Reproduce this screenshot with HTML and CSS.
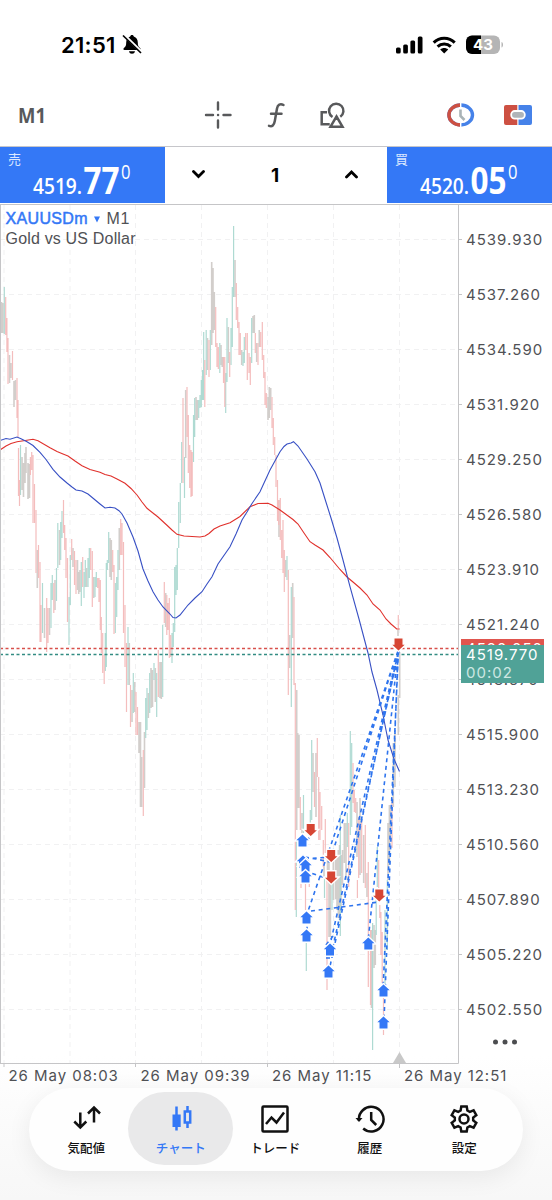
FILE: index.html
```html
<!DOCTYPE html>
<html lang="ja">
<head>
<meta charset="utf-8">
<title>XAUUSDm M1</title>
<link rel="stylesheet" href="styles.css">
</head>
<body>
<div class="screen">
  <header class="status">
    <div class="status-left">
      <span class="clock">21:51</span>
      <svg class="bell" width="20" height="21" viewBox="0 0 20 21"><path d="M10 1c-1 0-1.700.7-1.800 1.500C5.500 3.500 4.200 5.700 4.200 8.500c0 3-.6 4.200-2.300 5.500-.9.800-.6 2 .5 2h15.200c1.100 0 1.400-1.200.5-2-1.700-1.300-2.300-2.500-2.300-5.500 0-2.800-1.300-5-4-6C11.700 1.700 11 1 10 1zM7 17.200h6c-.2 1.700-1.500 2.500-3 2.500s-2.800-.8-3-2.500z"/><path d="M2 1l18 17.500" stroke="#fff" stroke-width="3"/><path d="M1 1.500l18 17.500" stroke="#000" stroke-width="1.700"/></svg>
    </div>
    <svg class="status-right" width="110" height="22" viewBox="0 0 110 22">
      <rect x="1" y="13.500" width="4.700" height="6" rx="1.500"/><rect x="8.200" y="10.500" width="4.700" height="9" rx="1.500"/><rect x="15.400" y="6.500" width="4.700" height="13" rx="1.500"/><rect x="22.800" y="2.500" width="4.700" height="17" rx="1.500"/>
      <g fill="none" stroke="#000" stroke-width="3"><path d="M38.700 8.600c5.800-5.800 15.200-5.800 21 0"/><path d="M42.600 12.700c3.700-3.600 9.500-3.600 13.200 0"/></g><path d="M45.200 15.600c2.300-2 5.700-2 8 0l-4 4z"/>
      <rect x="71" y="1.500" width="34" height="18.500" rx="6" fill="#b5b5b5"/><path d="M86 1.500v18.500h-9a6 6 0 0 1-6-6v-6.500a6 6 0 0 1 6-6z"/><path d="M106.500 8c2 .5 2 5 0 5.500z" fill="#b5b5b5"/>
      <text class="battery" x="88" y="16.300">43</text>
    </svg>
  </header>
  <nav class="toolbar">
    <svg class="period" width="185" height="30"><text x="0" y="23" textLength="28" lengthAdjust="spacingAndGlyphs">M1</text></svg>
    <svg class="tools" width="146" height="32" viewBox="0 0 146 32">
      <g fill="none" stroke="#58595b" stroke-width="2.400" stroke-linecap="round"><path d="M15 3.500v7M15 21.500v7M3 16h7M20.500 16h7"/><path d="M15 16h.1"/></g>
      <g fill="none" stroke="#58595b" stroke-width="2.500" stroke-linecap="round"><path d="M80.500 6c-3.200-1.700-5.800-.3-6.500 3.500l-2.200 12.500c-.8 4.500-2.600 6-5.800 4.800M68 14.800h10.500"/></g>
      <g fill="none" stroke="#58595b" stroke-width="2.500"><path d="M129.500 18a7.200 7.200 0 1 1 7.800-.2M124 13.300h-5.300v12h8M133.500 17.500l6 10.200h-12z"/></g>
    </svg>
    <svg class="modes" width="86" height="24" viewBox="0 0 86 24">
      <ellipse cx="14.700" cy="12" rx="11.800" ry="10" fill="none" stroke="#4682e9" stroke-width="3.400"/><path d="M14.700 2C8 2 2.900 6.500 2.900 12s5.100 10 11.800 10" fill="none" stroke="#cd5042" stroke-width="3.400"/><path d="M14.700 0v5M14.700 19v5" stroke="#fff" stroke-width="1.400"/><path d="M14.500 6.500v6.500l4 4" fill="none" stroke="#a9b3b7" stroke-width="2.600"/>
      <path d="M60 2h11.300v20H60a2 2 0 0 1-2-2V4a2 2 0 0 1 2-2z" fill="#cd5042"/><path d="M72.500 2H84a2 2 0 0 1 2 2v16a2 2 0 0 1-2 2H72.500z" fill="#4682e9"/><rect x="65.200" y="8" width="13.600" height="7.600" rx="3.500" fill="#afb4b8" stroke="#fff" stroke-width="1.800"/>
    </svg>
  </nav>
  <section class="trade">
    <div class="quote"><span class="side">売</span>
      <svg class="price" width="165" height="56"><text x="33" y="47" font-size="22" textLength="49" lengthAdjust="spacingAndGlyphs">4519.</text><text class="big" x="83.500" y="47" font-size="38" textLength="36" lengthAdjust="spacingAndGlyphs">77</text><text class="sup" x="121" y="32" font-size="19.500" textLength="9.500" lengthAdjust="spacingAndGlyphs">0</text></svg></div>
    <div class="volume">
      <svg width="13" height="9" viewBox="0 0 13 9"><path d="M1.500 1.500l5 5 5-5"/></svg>
      <span>1</span>
      <svg width="13" height="9" viewBox="0 0 13 9"><path d="M1.500 7l5-5 5 5"/></svg>
    </div>
    <div class="quote"><span class="side">買</span>
      <svg class="price" width="165" height="56"><text x="33" y="47" font-size="22" textLength="49" lengthAdjust="spacingAndGlyphs">4520.</text><text class="big" x="83.500" y="47" font-size="38" textLength="36" lengthAdjust="spacingAndGlyphs">05</text><text class="sup" x="121" y="32" font-size="19.500" textLength="9.500" lengthAdjust="spacingAndGlyphs">0</text></svg></div>
  </section>
  <svg class="chart" width="552" height="884" viewBox="0 204 552 884">
    <defs>
      <path id="up" d="M0-7.500L8 0H4.700V6.200H-4.700V0H-8Z" fill="#3478f6" stroke="#fff" stroke-width="1.400"/>
      <path id="down" d="M0 7.500L8 0H4.700V-6.200H-4.700V0H-8Z" fill="#d64533" stroke="#fff" stroke-width="1.400"/>
    </defs>
    <path class="grid" d="M4 205V1063M70 205V1063M135.500 205V1063M201.500 205V1063M267.500 205V1063M333.500 205V1063M399.500 205V1063"/>
    <path class="grid" d="M0 239.500H458M0 294.500H458M0 349.500H458M0 404.500H458M0 459.500H458M0 514.500H458M0 569.500H458M0 624.500H458M0 679.500H458M0 734.500H458M0 789.500H458M0 844.500H458M0 899.500H458M0 954.500H458M0 1009.500H458"/>
    <path class="mix" d="M1.500 302V333M3 303V333M9.500 355V383M11 363V378M14 381V407M15.500 380V400M22 457V490M23.500 463V497M25 453V483M26 447V473M28 463V499M29.500 464V498M37.300 550V588M44.500 608V638M49.500 608V635M55 580V610M59.500 530V565M73 548V567M77.500 560V590M78.700 572V594M80 570V592M86.700 568V587M93.700 577V598M110 538V577M111.300 540V580M119.300 528V570M129.300 643V685M132 690V722M134.700 682V712M139 722V753M140.500 722V807M141.700 757V807M144.500 732V788M148.300 693V718M151 668V708M152.500 670V707M155.300 668V702M160 662V698M161.300 662V699M165.700 593V627M185.700 390V458M196 397V420M197.300 400V420M207.500 338V370M211.700 262V345M213 268V333M214.300 292V330M221 345V365M222.200 357V367M228.300 327V363M235 260V297M241.700 350V365M253 316V333M254.300 315V333M256.700 343V362M259.300 330V347M268 397V420M269.300 387V418M270.700 388V410M279 500V537M285.700 560V577M289.700 635V668M292.700 583V638M297.700 733V808M299 735V808M302 813V833M313 753V792M316 753V817M327.500 853V880M329 853V937M330.400 870V937M333.300 855V900M335.500 860V899M337 855V910M338.300 850V918M339.600 845V920M341 855V910M342.500 850V885M344.300 823V863M346 823V880M357 802V857M360 798V875M363.700 835V883M367 873V897M374 925V968M375.300 930V965M388 823V880M389.400 805V865M390.500 805V840M393.300 743V807M395 733V787M398.300 695V735M399.700 652V698M398 630V636M296.700 690V830M324 865V877M371.500 930V1008"/>
    <path class="bull" d="M4.300 287V334M20.500 445V495M42.500 583V633M51 583V628M52.300 575V600M56.500 568V601M57.800 523V568M60.700 522V560M62 511V538M69 597V645M70.300 555V605M81.300 562V606M84 572V598M85.300 560V587M88 558V587M89.300 548V578M95 577V597M96.300 572V587M105.300 633V671M106.300 563V667M107.300 560V570M108.700 532V563M115.300 583V633M116.700 577V617M118 550V590M128 627V685M133.300 673V713M145.700 698V738M147 688V730M149.700 673V713M154 663V680M156.700 673V717M162.700 625V697M172 633V663M173.300 623V647M174.700 567V632M176 565V595M177.300 548V590M178.700 502V548M180.300 483V523M181.700 442V483M184.500 457V498M193.500 415V462M194.700 398V437M198.700 400V418M200 395V408M201.300 380V407M202.500 370V400M203.700 332V400M206.200 330V375M210.300 330V370M219.800 343V373M225.700 373V413M227 318V382M231 328V365M232.300 287V347M233.600 226V297M243 352V366M244.300 337V363M251.700 318V363M287 556V580M291.300 587V707M303.500 795V833M310.300 810V823M311.700 740V820M340.300 815V936M347.300 813V847M350.300 731V835M351.700 743V827M372.600 923V1050M376.200 890V935M377.300 847V887M385 910V990M387.300 880V950M306.300 943V971M296.300 840V917M332 880V910M324.500 877V898"/>
    <path class="bear" d="M5.700 297V335M6.900 318V352M8 338V384M12.500 351V380M17 378V418M18 400V438M18.500 448V496M19.500 480V506M30.400 457V475M31.700 452V470M33 455V523M34.500 484V523M36 510V573M38.500 545V578M40 562V642M41 605V642M46.700 598V652M48 608V643M53.800 583V613M63.500 500V533M64.700 525V550M66 538V578M67.500 558V622M71.700 539V560M74.500 551V585M76 560V594M82.700 557V587M90.700 548V570M92.300 551V607M97.700 578V588M99 578V602M100.300 580V630M101.300 617V653M102.700 633V673M104.200 655V684M112.700 550V572M114 565V634M120.700 519V555M122 523V555M123.500 542V633M125 605V667M126.500 643V712M130.500 685V727M136 692V735M137.500 707V735M143.300 750V816M158.300 650V697M164.300 582V623M166.800 595V635M168 603V630M169.300 598V658M170.700 635V657M183 398V483M187 387V437M188.300 415V473M189.700 445V488M191 450V497M192.200 452V496M204.800 360V407M209 340V377M215.700 307V347M217 343V367M218.300 347V369M223.500 357V383M224.800 357V407M229.700 352V377M236.300 283V320M237.700 307V328M239 322V355M240.300 333V355M245.700 333V350M247.300 333V380M249 353V373M250.300 357V385M255.300 333V353M258 343V365M260.700 332V347M262.300 322V360M263.700 355V378M265 372V405M266.300 393V408M272 397V428M273.300 418V445M274.700 437V455M276 455V487M277.500 480V521M278.700 500V525M280.300 498V540M281.700 530V558M283 520V573M284.300 550V592M288.300 570V695M294 597V685M295.300 683V910M300.300 797V830M305.500 880V910M301 880V888M309.300 880V887M314.500 772V807M317.300 738V777M318.700 777V840M320 792V840M321.700 806V830M323.300 840V867M325.300 819V853M327 880V990M348.700 823V887M353 763V803M354.300 790V812M355.700 798V813M358.700 817V878M361.700 820V873M365.300 825V888M357.400 880V898M368.300 862V987M370.500 930V1005M378.700 860V890M379.800 905V918M380.900 912V955M382.200 932V983M383.500 985V1035M392 798V848M398.300 615V628"/>
    <path class="bid-line" d="M0 648.500H458"/><path class="ask-line" d="M0 654.500H458"/>
    <polyline class="ma-slow" points="0,450 6,446 11,443.500 17,441.700 22,441 33,439.300 38,440.700 50,447.700 57,451.500 63,454 68,456 75,461 82,465.700 90,469.500 100,472.300 105,474.500 111,476 117,479 125,483.300 131,488.500 137,495 142,502 147,508.300 158,517 166.700,525 172,530 177,534.300 184,536 200,537 205,536 209,533.500 214,529 220,526 230,522.700 240,516.500 250,506.700 258,503.500 268,503.300 272,505 280,510 293,519.500 298,524 304,533 310,541.700 315,545 323,550 330,557.500 340,569.500 347,577 353,582 360,588 367,595 373,604 380,610 386,619 391,624 396.700,629 399.500,629"/>
    <polyline class="ma-fast" points="0,440.500 6,438.500 10,439.300 17,437 21,438.700 27,441.700 33,445.500 40,452.300 46,459.500 53,469.300 60,477 67,483 72,487 76,490 82,491 88,494 94,499 100,504 105,508 110,507.300 115,508 119,510.700 122,514 127,523 133,537 138,551 143,569 148,581 153,591.700 158,600 163,607 170,614 173,617.500 176,618 180,615 188,605 195,598 202,591.700 207,584 212,576.700 218,564 230,546.700 236,534 242,520 247,512 251.700,504 260,491.700 270,470 280,451.700 284,446.500 287,444 291,443 293.500,441.700 298,446 307,459 315,471.700 320,483 325,499 331,518 337,538 343,560 350,586.700 359,619 368,653 372,672 377,690 383,715 388,740 394,759 399.500,771.500"/>
    <path class="deal" d="M398 651L307 914M398 651L331 857M398 651L329 949M399 651L332 951M398 653L329 971M398 651L368 942M398.500 651L383 990M398 653L384 1021M311 911L379 902M302 847L312 834M305 859L331 857M305 857L331 862M305 871L331 880M307 919V936M326 945L333 936M326 958H333"/>
    <use href="#up" x="302.500" y="841"/><use href="#up" x="303" y="862"/><use href="#up" x="305.500" y="866"/><use href="#up" x="305.500" y="877"/><use href="#up" x="306.500" y="918"/><use href="#up" x="306.500" y="936"/><use href="#up" x="330" y="950"/><use href="#up" x="328.500" y="972"/><use href="#up" x="368.300" y="944"/><use href="#up" x="383.500" y="991"/><use href="#up" x="383.500" y="1023"/>
    <use href="#down" x="310.700" y="829.500"/><use href="#down" x="331.200" y="855.500"/><use href="#down" x="331.200" y="877"/><use href="#down" x="379.300" y="895"/><use href="#down" x="398.500" y="644"/>
    <path class="frame" d="M0 204.500H552M.5 204V1063M0 1063.500H458.500V204M458 239.500h4M458 294.500h4M458 349.500h4M458 404.500h4M458 459.500h4M458 514.500h4M458 569.500h4M458 624.500h4M458 679.500h4M458 734.500h4M458 789.500h4M458 844.500h4M458 899.500h4M458 954.500h4M458 1009.500h4M4 1063v4M135.500 1063v4M267.500 1063v4M399.500 1063v5"/>
    <path d="M399.500 1052l6.500 11h-13z" fill="#c8c8c8"/>
    <g class="axis">
      <text x="466" y="244.500">4539.930</text><text x="466" y="299.500">4537.260</text><text x="466" y="354.500">4534.590</text><text x="466" y="409.500">4531.920</text><text x="466" y="464.500">4529.250</text><text x="466" y="519.500">4526.580</text><text x="466" y="574.500">4523.910</text><text x="466" y="629.500">4521.240</text><text x="466" y="684.500">4518.570</text><text x="466" y="739.500">4515.900</text><text x="466" y="794.500">4513.230</text><text x="466" y="849.500">4510.560</text><text x="466" y="904.500">4507.890</text><text x="466" y="959.500">4505.220</text><text x="466" y="1014.500">4502.550</text>
    </g>
    <g class="axis dates">
      <text x="8.500" y="1081">26 May 08:03</text><text x="140.500" y="1081">26 May 09:39</text><text x="272" y="1081">26 May 11:15</text><text x="404" y="1081">26 May 12:51</text>
    </g>
    <rect x="461" y="639" width="83" height="20" fill="#e0554e"/>
    <g class="axis tag"><text x="466" y="654">4520.050</text><rect x="461" y="645" width="83" height="38" fill="#50a297"/><text x="466" y="659.500">4519.770</text><text class="timer" x="466" y="677.500">00:02</text></g>
    <text class="symbol" x="5.500" y="224" textLength="82">XAUUSDm</text><path d="M94 216.500h6l-3 6z" fill="#3478f6"/><text class="desc" x="106.500" y="224" textLength="23">M1</text><text class="desc" x="5.500" y="244" textLength="130">Gold vs US Dollar</text>
    <g fill="#4c4d50"><circle cx="495.500" cy="1042" r="2.500"/><circle cx="505" cy="1042" r="2.500"/><circle cx="514.500" cy="1042" r="2.500"/></g>
  </svg>
  <nav class="tabs">
    <div class="tab"><svg width="30" height="30" viewBox="0 0 30 30"><path d="M9.300 8.500v14.500M3.300 17.500l6 6 6-6M23 18.500V4M17 9.500l6-6 6 6"/></svg><span>気配値</span></div>
    <div class="tab active"><svg width="30" height="30" viewBox="0 0 30 30"><path d="M10.500 2.500v24M21.500 2v5M21.500 18v6M18.800 7.500h5.400v11h-5.400z"/><rect class="solid" x="6.500" y="10.500" width="8.200" height="12.500"/></svg><span>チャート</span></div>
    <div class="tab"><svg width="30" height="30" viewBox="0 0 30 30"><rect x="2.500" y="2.500" width="25" height="25" rx="1"/><path d="M6 20l5.500-6.500 5 5L24 8.500"/></svg><span>トレード</span></div>
    <div class="tab"><svg width="30" height="30" viewBox="0 0 30 30"><path d="M4 16.500A12.300 12.300 0 1 1 8.200 24.500M16.200 8v8l5 5"/><path class="solid" d="M.5 14h7l-3.500 4z"/></svg><span>履歴</span></div>
    <div class="tab"><svg width="30" height="30" viewBox="0 0 30 30"><path d="M12.300 2.500h5.400l.7 4 2.400 1.400 3.800-1.500 2.700 4.700-3.100 2.500v2.800l3.100 2.500-2.700 4.700-3.800-1.500-2.400 1.400-.7 4h-5.400l-.7-4-2.400-1.400-3.800 1.500-2.700-4.700 3.100-2.500v-2.800l-3.100-2.500 2.700-4.700 3.800 1.500 2.400-1.400z"/><circle cx="15" cy="15" r="4.500"/></svg><span>設定</span></div>
  </nav>
</div>
</body>
</html>
```
FILE: styles.css
```css
* { box-sizing: border-box; }
body { margin: 0; background: #fff; font-family: Inter, "Noto Sans CJK JP", sans-serif; }
.screen { width: 552px; height: 1200px; overflow: hidden; display: flex; flex-direction: column; background: linear-gradient(#fff 88%, #fcfcfc 92%, #f7f7f7); }
.status { flex: none; height: 84px; padding: 34px 47px 0 61px; display: flex; justify-content: space-between; }
.status-left { display: flex; gap: 3px; height: 21px; }
.clock { font-size: 22px; line-height: 22px; font-weight: 600; width: 58px; letter-spacing: .3px; white-space: nowrap; }
.battery { font: 700 15px Inter, sans-serif; fill: #fff; text-anchor: middle; }
.toolbar { flex: none; height: 63px; padding: 0 20px 0 18px; display: flex; align-items: center; border-bottom: 1px solid #c6c6ca; }
.period { font: 700 22px "Open Sans", sans-serif; fill: #58595b; }
.modes { margin-left: auto; }
.trade { flex: none; height: 57px; display: flex; background: #fff; }
.quote { flex: none; width: 165px; height: 56px; display: grid; background: #3478f6; color: #fff; }
.quote > * { grid-area: 1 / 1; }
.side { padding: 4px 0 0 8px; font: 13px/16px "Noto Sans CJK JP", sans-serif; color: #dce8ff; }
.price { font-family: "Open Sans", sans-serif; font-weight: 600; fill: #fff; }
.big { font-weight: 700; }
.sup { font-weight: 500; }
.volume { flex: 1; padding: 0 29px 2px 27px; display: flex; align-items: center; justify-content: space-between; font-size: 19px; font-weight: 700; }
.volume span { padding-top: 2px; }
.volume path { fill: none; stroke: #000; stroke-width: 2.800; stroke-linecap: round; }
.chart { flex: none; display: block; }
.grid { fill: none; stroke: #f1f1f2; stroke-dasharray: 5 4; }
.mix, .bull, .bear { fill: none; stroke-width: 1.200; }
.mix { stroke: #d2cecb; stroke-width: 1.600; }
.bull { stroke: #aedad2; }
.bear { stroke: #f4bdbd; }
.bid-line, .ask-line { stroke-width: 1.500; stroke-dasharray: 3 2.500; }
.bid-line { stroke: #d8504b; }
.ask-line { stroke: #328c82; }
.ma-slow, .ma-fast { fill: none; stroke-width: 1.100; }
.ma-slow { stroke: #e0312c; }
.ma-fast { stroke: #3850c4; }
.deal { fill: none; stroke: #2e74ee; stroke-width: 1.600; stroke-dasharray: 4 3.700; }
.frame { fill: none; stroke: #c5c5c7; }
.axis text { font-family: Inter, sans-serif; font-size: 15px; letter-spacing: 1px; fill: #505155; }
.dates text { letter-spacing: .95px; }
.tag text { fill: #fff; }
.tag .timer { fill: #cde7e2; }
.symbol, .desc { font: 16px "Liberation Sans", sans-serif; }
.symbol { fill: #3478f6; stroke: #3478f6; stroke-width: .5; }
.desc { fill: #505155; }
.tabs { flex: none; width: 494px; height: 83px; margin: 0 0 0 29px; padding: 0 10px; border-radius: 42px; display: flex; background: #fefefe; box-shadow: 0 6px 24px rgba(0, 0, 0, .07); }
.tab { flex: none; width: 94.500px; margin: 4px 0 6px; border-radius: 37px; display: flex; flex-direction: column; align-items: center; padding-top: 12px; gap: 5px; color: #111; font: 500 12.500px/18px "Noto Sans CJK JP", sans-serif; }
.tab svg { fill: none; stroke: currentColor; stroke-width: 2.500; }
.tab .solid { fill: currentColor; stroke: none; }
.tab.active { width: 105px; margin-left: -5.250px; margin-right: -5.250px; background: #e9e9ea; color: #3478f6; }
```
